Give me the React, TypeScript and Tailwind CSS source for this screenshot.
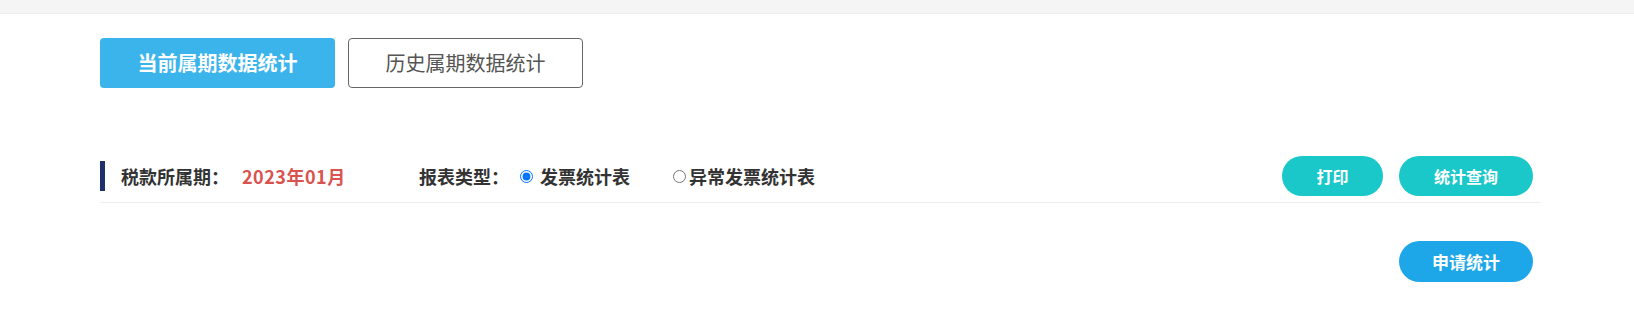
import { useState } from 'react';

const font = { fontFamily: '"Noto Sans CJK SC", "Microsoft YaHei", sans-serif' };

export default function App() {
  const [tab, setTab] = useState<'current' | 'history'>('current');
  const [type, setType] = useState<'invoice' | 'abnormal'>('invoice');

  return (
    <div className="min-h-[319px] bg-white" style={font}>
      <div className="h-[14px] bg-[#f5f5f5] border-b border-[#eeeeee]" />
      <div className="pl-[100px] pr-[93px]">
        <div className="mt-[24px] flex gap-[13px]">
          <button
            onClick={() => setTab('current')}
            className={`h-[50px] w-[235px] rounded-[4px] text-[20px] ${
              tab === 'current'
                ? 'bg-[#3bb4ec] font-bold text-white'
                : 'border border-[#666666] text-[#555555]'
            }`}
          >
            当前属期数据统计
          </button>
          <button
            onClick={() => setTab('history')}
            className={`h-[50px] w-[235px] rounded-[4px] text-[20px] ${
              tab === 'history'
                ? 'bg-[#3bb4ec] font-bold text-white'
                : 'border border-[#666666] text-[#555555]'
            }`}
          >
            历史属期数据统计
          </button>
        </div>

        <div className="mt-[68px] flex h-[47px] items-start border-b border-[#eeeeee]">
          <div className="flex h-[40px] flex-1 items-center text-[18px] font-bold">
            <div className="h-[30px] w-[5px] bg-[#1e2f6e]" />
            <span className="ml-[16px] text-[#333333]">税款所属期：</span>
            <span className="ml-[13px] w-[177px] text-[#d9534f] tracking-[0.5px]">2023年01月</span>
            <span className="text-[#333333]">报表类型：</span>
            <label className="ml-[11px] flex items-center cursor-pointer">
              <input
                type="radio"
                name="type"
                checked={type === 'invoice'}
                onChange={() => setType('invoice')}
                className="h-[13px] w-[13px] accent-[#0075ff]"
              />
              <span className="ml-[7px] w-[133px] text-[#333333]">发票统计表</span>
            </label>
            <label className="flex items-center cursor-pointer">
              <input
                type="radio"
                name="type"
                checked={type === 'abnormal'}
                onChange={() => setType('abnormal')}
                className="h-[13px] w-[13px] accent-[#0075ff]"
              />
              <span className="ml-[3px] text-[#333333]">异常发票统计表</span>
            </label>
          </div>
          <div className="mr-[8px] flex gap-[16px]">
            <button className="h-[40px] w-[101px] rounded-full bg-[#1ac8c9] text-[16px] font-bold text-white">
              打印
            </button>
            <button className="h-[40px] w-[134px] rounded-full bg-[#1ac8c9] text-[16px] font-bold text-white">
              统计查询
            </button>
          </div>
        </div>

        <div className="mt-[38px] flex justify-end pr-[8px]">
          <button className="h-[41px] w-[134px] rounded-full bg-[#1ea7e8] text-[17px] font-bold text-white">
            申请统计
          </button>
        </div>
      </div>
    </div>
  );
}
